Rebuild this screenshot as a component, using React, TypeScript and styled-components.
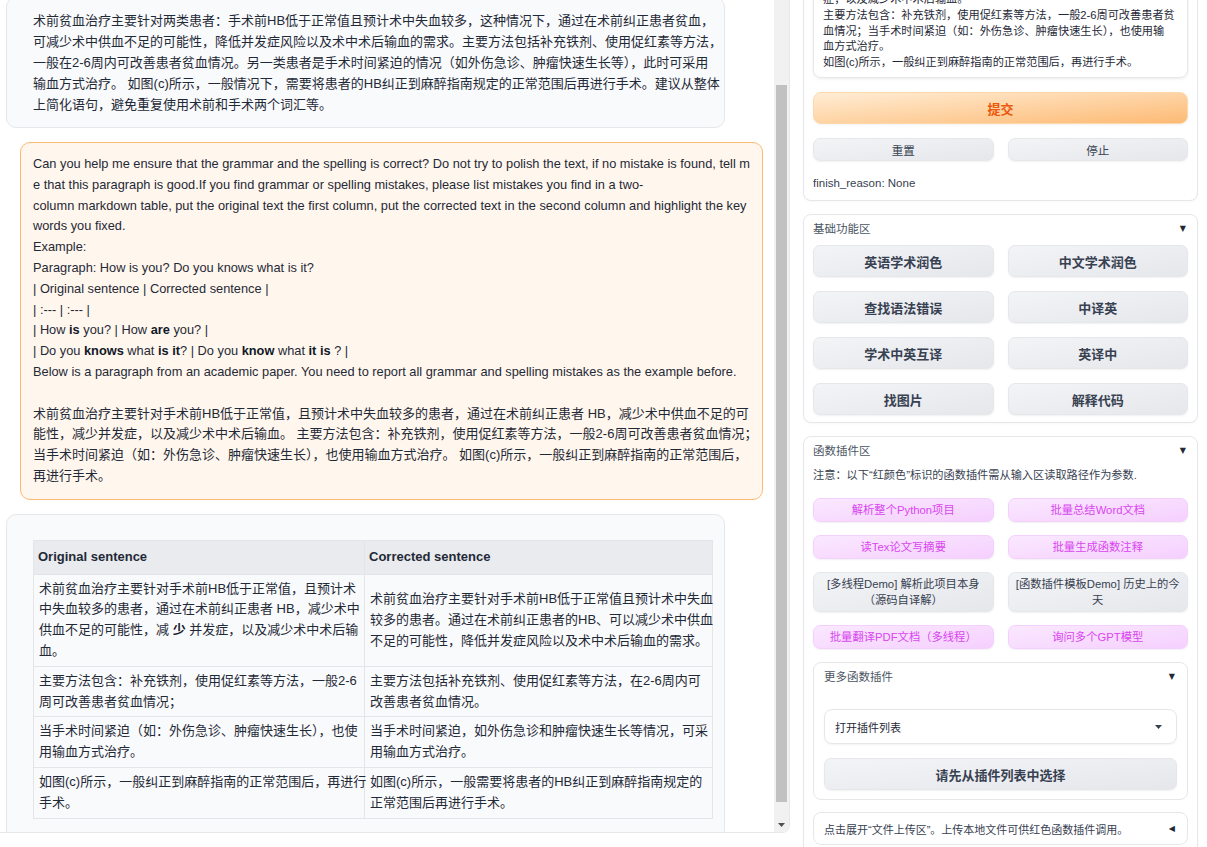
import React, { useLayoutEffect, useRef } from "react";
import styled, { createGlobalStyle } from "styled-components";

const FONT = `"Liberation Sans", "Noto Sans CJK SC", sans-serif`;

const Global = createGlobalStyle`
  html, body { margin: 0; padding: 0; background: #ffffff; overflow: hidden; }
  body { font-family: ${FONT}; color: #1f2937; }
  * { box-sizing: border-box; }
  button { font-family: ${FONT}; }
`;

/* ---------- page frame ---------- */

const Viewport = styled.div`
  height: 100vh;
  overflow: hidden;
`;

const Page = styled.div`
  display: grid;
  grid-template-columns: 790px 395px;
  column-gap: 13px;
  align-items: start;
  padding-bottom: 60px;
`;

/* ---------- chat ---------- */

const ChatBox = styled.div`
  height: 885px;
  border: 1px solid #e5e7eb;
  border-left: none;
  border-radius: 0 0 8px 0;
  display: flex;
  overflow: hidden;
  background: #ffffff;
`;

const ChatPane = styled.div`
  flex: 1;
  min-width: 0;
  overflow: hidden;
`;

const ScrollTrack = styled.div`
  flex: none;
  width: 15px;
  background: #f1f1f1;
  display: flex;
  flex-direction: column;
  align-items: center;
`;

const ScrollArrow = styled.div`
  flex: none;
  height: 15px;
  width: 15px;
  display: flex;
  align-items: center;
  justify-content: center;
`;

const ScrollThumb = styled.div<{ $top: number; $len: number }>`
  flex: none;
  margin-top: ${(p) => p.$top}px;
  height: ${(p) => p.$len}px;
  width: 11px;
  background: #c1c1c1;
`;

const ScrollRest = styled.div`
  flex: 1;
`;

const MessageList = styled.div`
  display: flex;
  flex-direction: column;
  gap: 14px;
  padding: 48px 11px 14px 6px;
`;

const Bubble = styled.div<{ $role: "user" | "bot"; $pad?: string }>`
  align-self: ${(p) => (p.$role === "user" ? "flex-end" : "flex-start")};
  width: ${(p) => (p.$role === "user" ? "743px" : "719px")};
  background: ${(p) => (p.$role === "user" ? "#fff7ed" : "#f9fafb")};
  border: 1px solid ${(p) => (p.$role === "user" ? "#fdba74" : "#e5e7eb")};
  border-radius: 10px;
  padding: ${(p) => p.$pad ?? (p.$role === "user" ? "11px 12px 12px" : "12px 26px 12px")};
  font-size: 13px;
  line-height: ${(p) => (p.$role === "user" ? "20.8px" : "21px")};
  color: #1f2937;
`;

const Line = styled.div<{ $latin?: boolean }>`
  white-space: pre;
  font-size: ${(p) => (p.$latin ? "12.8px" : "inherit")};
`;

const Strong = styled.strong`
  font-weight: 700;
  color: #111827;
`;

const Table = styled.table`
  border-collapse: collapse;
  table-layout: fixed;
  width: 679px;
  font-size: 13px;
  line-height: 20.8px;
`;

const Th = styled.th<{ $w: number }>`
  width: ${(p) => p.$w}px;
  background: #e9ebee;
  border: 1px solid #e3e5e8;
  text-align: left;
  font-weight: 700;
  padding: 6px 4px;
  color: #1f2937;
`;

const Td = styled.td`
  background: #f9fafb;
  border: 1px solid #e3e5e8;
  padding: 4px 5px;
  vertical-align: middle;
  color: #1f2937;
`;

/* ---------- side panel ---------- */

const Side = styled.div`
  display: flex;
  flex-direction: column;
  gap: 13px;
`;

const Block = styled.section<{ $pad: string; $gap?: number }>`
  background: #ffffff;
  border: 1px solid #e5e7eb;
  border-radius: 8px;
  padding: ${(p) => p.$pad};
  display: flex;
  flex-direction: column;
  gap: ${(p) => p.$gap ?? 0}px;
  box-shadow: 0 1px 2px rgba(0, 0, 0, 0.03);
`;

const InputArea = styled.div`
  height: 119px;
  border: 1px solid #e5e7eb;
  border-radius: 8px;
  box-shadow: 0 1px 3px rgba(0, 0, 0, 0.08);
  padding: 0 9px 6px;
  display: flex;
  flex-direction: column;
  justify-content: flex-end;
  overflow: hidden;
  font-size: 11.2px;
  line-height: 15.8px;
  color: #1f2937;
`;

const PrimaryButton = styled.button`
  height: 32px;
  border: 1px solid #fed7aa;
  border-radius: 8px;
  background: linear-gradient(to bottom right, #ffedd5, #fdba74);
  color: #ea580c;
  font-family: ${FONT};
  font-size: 13px;
  font-weight: 700;
  box-shadow: 0 1px 2px rgba(0, 0, 0, 0.05);
  cursor: pointer;
`;

const ButtonGrid = styled.div<{ $row: number }>`
  display: grid;
  grid-template-columns: 1fr 1fr;
  column-gap: 14px;
  row-gap: ${(p) => p.$row}px;
`;

const GrayButton = styled.button<{ $size: "sm" | "lg" }>`
  height: ${(p) => (p.$size === "lg" ? "32px" : "23px")};
  border: 1px solid #e5e7eb;
  border-radius: 7px;
  background: linear-gradient(to bottom right, #f3f4f6, #e5e7eb);
  color: #374151;
  font-family: ${FONT};
  font-size: ${(p) => (p.$size === "lg" ? "13px" : "11.5px")};
  font-weight: ${(p) => (p.$size === "lg" ? 700 : 400)};
  box-shadow: 0 1px 2px rgba(0, 0, 0, 0.06);
  cursor: pointer;
`;

const PluginButton = styled.button<{ $tone: "pink" | "gray" }>`
  min-height: 24px;
  padding: 3px 2px;
  border: 1px solid ${(p) => (p.$tone === "pink" ? "#f5d0fe" : "#e5e7eb")};
  border-radius: 7px;
  background: ${(p) =>
    p.$tone === "pink"
      ? "linear-gradient(to bottom right, #fae8ff, #f5d0fe)"
      : "linear-gradient(to bottom right, #f3f4f6, #e5e7eb)"};
  color: ${(p) => (p.$tone === "pink" ? "#d946ef" : "#374151")};
  font-family: ${FONT};
  font-size: 11.3px;
  font-weight: 400;
  line-height: 16px;
  white-space: nowrap;
  box-shadow: 0 1px 2px rgba(0, 0, 0, 0.06);
  cursor: pointer;
`;

const Status = styled.div`
  font-size: 11.5px;
  line-height: 16px;
  color: #374151;
`;

const BlockHeader = styled.div<{ $mb: number }>`
  display: flex;
  justify-content: space-between;
  align-items: center;
  font-size: 11.5px;
  line-height: 14px;
  color: #4b5563;
  margin-bottom: ${(p) => p.$mb}px;
`;

const Arrow = styled.span`
  font-family: "DejaVu Sans", sans-serif;
  font-size: 8px;
  color: #1f2937;
  margin-right: 2px;
`;

const Note = styled.div`
  font-size: 11.2px;
  line-height: 17px;
  color: #374151;
  margin-bottom: 14px;
`;

const SubBlock = styled.div`
  margin-top: 13px;
  border: 1px solid #e5e7eb;
  border-radius: 8px;
  padding: 7px 10px 9px;
  display: flex;
  flex-direction: column;
`;

const Select = styled.div`
  margin-top: 25px;
  margin-bottom: 14px;
  height: 35px;
  border: 1px solid #e5e7eb;
  border-radius: 8px;
  box-shadow: 0 1px 2px rgba(0, 0, 0, 0.05);
  display: flex;
  align-items: center;
  justify-content: space-between;
  padding: 0 14px 0 10px;
  font-size: 11px;
  color: #1f2937;
`;

const Upload = styled.div`
  margin-top: 12px;
  height: 33px;
  border: 1px solid #e5e7eb;
  border-radius: 8px;
  display: flex;
  align-items: center;
  justify-content: space-between;
  padding: 0 10px 0 10px;
  font-size: 11px;
  color: #374151;
`;

/* ---------- data ---------- */

const botReply = [
  "术前贫血治疗主要针对两类患者：手术前HB低于正常值且预计术中失血较多，这种情况下，通过在术前纠正患者贫血，",
  "可减少术中供血不足的可能性，降低并发症风险以及术中术后输血的需求。主要方法包括补充铁剂、使用促红素等方法，",
  "一般在2-6周内可改善患者贫血情况。另一类患者是手术时间紧迫的情况（如外伤急诊、肿瘤快速生长等），此时可采用",
  "输血方式治疗。 如图(c)所示，一般情况下，需要将患者的HB纠正到麻醉指南规定的正常范围后再进行手术。建议从整体",
  "上简化语句，避免重复使用术前和手术两个词汇等。",
];

const userEnglish: React.ReactNode[] = [
  "Can you help me ensure that the grammar and the spelling is correct? Do not try to polish the text, if no mistake is found, tell m",
  "e that this paragraph is good.If you find grammar or spelling mistakes, please list mistakes you find in a two-",
  "column markdown table, put the original text the first column, put the corrected text in the second column and highlight the key",
  "words you fixed.",
  "Example:",
  "Paragraph: How is you? Do you knows what is it?",
  "| Original sentence | Corrected sentence |",
  "| :--- | :--- |",
  <>
    {"| How "}
    <Strong>is</Strong>
    {" you? | How "}
    <Strong>are</Strong>
    {" you? |"}
  </>,
  <>
    {"| Do you "}
    <Strong>knows</Strong>
    {" what "}
    <Strong>is it</Strong>
    {"? | Do you "}
    <Strong>know</Strong>
    {" what "}
    <Strong>it is</Strong>
    {" ? |"}
  </>,
  "Below is a paragraph from an academic paper. You need to report all grammar and spelling mistakes as the example before.",
];

const userChinese = [
  "\u00a0",
  "术前贫血治疗主要针对手术前HB低于正常值，且预计术中失血较多的患者，通过在术前纠正患者 HB，减少术中供血不足的可",
  "能性，减少并发症，以及减少术中术后输血。 主要方法包含：补充铁剂，使用促红素等方法，一般2-6周可改善患者贫血情况；",
  "当手术时间紧迫（如：外伤急诊、肿瘤快速生长），也使用输血方式治疗。 如图(c)所示，一般纠正到麻醉指南的正常范围后，",
  "再进行手术。",
];

const tableRows: { a: React.ReactNode[]; b: React.ReactNode[] }[] = [
  {
    a: [
      "术前贫血治疗主要针对手术前HB低于正常值，且预计术",
      "中失血较多的患者，通过在术前纠正患者 HB，减少术中",
      <>
        {"供血不足的可能性，减 "}
        <Strong>少</Strong>
        {" 并发症，以及减少术中术后输"}
      </>,
      "血。",
    ],
    b: [
      "术前贫血治疗主要针对手术前HB低于正常值且预计术中失血",
      "较多的患者。通过在术前纠正患者的HB、可以减少术中供血",
      "不足的可能性，降低并发症风险以及术中术后输血的需求。",
    ],
  },
  {
    a: ["主要方法包含：补充铁剂，使用促红素等方法，一般2-6", "周可改善患者贫血情况；"],
    b: ["主要方法包括补充铁剂、使用促红素等方法，在2-6周内可", "改善患者贫血情况。"],
  },
  {
    a: ["当手术时间紧迫（如：外伤急诊、肿瘤快速生长），也使", "用输血方式治疗。"],
    b: ["当手术时间紧迫，如外伤急诊和肿瘤快速生长等情况，可采", "用输血方式治疗。"],
  },
  {
    a: ["如图(c)所示，一般纠正到麻醉指南的正常范围后，再进行", "手术。"],
    b: ["如图(c)所示，一般需要将患者的HB纠正到麻醉指南规定的", "正常范围后再进行手术。"],
  },
];

const inputLines = [
  "症，以及减少术中术后输血。",
  "主要方法包含：补充铁剂，使用促红素等方法，一般2-6周可改善患者贫",
  "血情况；当手术时间紧迫（如：外伤急诊、肿瘤快速生长），也使用输",
  "血方式治疗。",
  "如图(c)所示，一般纠正到麻醉指南的正常范围后，再进行手术。",
];

const basicFns = ["英语学术润色", "中文学术润色", "查找语法错误", "中译英", "学术中英互译", "英译中", "找图片", "解释代码"];

const plugins: { tone: "pink" | "gray"; lines: string[] }[] = [
  { tone: "pink", lines: ["解析整个Python项目"] },
  { tone: "pink", lines: ["批量总结Word文档"] },
  { tone: "pink", lines: ["读Tex论文写摘要"] },
  { tone: "pink", lines: ["批量生成函数注释"] },
  { tone: "gray", lines: ["[多线程Demo] 解析此项目本身", "（源码自译解）"] },
  { tone: "gray", lines: ["[函数插件模板Demo] 历史上的今", "天"] },
  { tone: "pink", lines: ["批量翻译PDF文档（多线程）"] },
  { tone: "pink", lines: ["询问多个GPT模型"] },
];

const renderLines = (lines: React.ReactNode[], latin = false) =>
  lines.map((l, i) => (
    <Line key={i} $latin={latin}>
      {l}
    </Line>
  ));

/* ---------- app ---------- */

export default function App() {
  const viewRef = useRef<HTMLDivElement>(null);

  useLayoutEffect(() => {
    if (viewRef.current) viewRef.current.scrollTop = 52;
  }, []);

  return (
    <>
      <Global />
      <Viewport ref={viewRef}>
        <Page>
          <ChatBox>
            <ChatPane>
              <MessageList>
                <Bubble $role="bot">{renderLines(botReply)}</Bubble>
                <Bubble $role="user">
                  {renderLines(userEnglish, true)}
                  {renderLines(userChinese)}
                </Bubble>
                <Bubble $role="bot" $pad="25px 26px 20px">
                  <Table>
                    <thead>
                      <tr>
                        <Th $w={331}>Original sentence</Th>
                        <Th $w={348}>Corrected sentence</Th>
                      </tr>
                    </thead>
                    <tbody>
                      {tableRows.map((r, i) => (
                        <tr key={i}>
                          <Td>{renderLines(r.a)}</Td>
                          <Td>{renderLines(r.b)}</Td>
                        </tr>
                      ))}
                    </tbody>
                  </Table>
                </Bubble>
              </MessageList>
            </ChatPane>
            <ScrollTrack>
              <ScrollArrow>
                <svg width="7" height="4" viewBox="0 0 7 4">
                  <path d="M0 4 L7 4 L3.5 0 Z" fill="#505050" />
                </svg>
              </ScrollArrow>
              <ScrollThumb $top={121} $len={717} />
              <ScrollRest />
              <ScrollArrow>
                <svg width="7" height="4" viewBox="0 0 7 4">
                  <path d="M0 0 L7 0 L3.5 4 Z" fill="#505050" />
                </svg>
              </ScrollArrow>
            </ScrollTrack>
          </ChatBox>

          <Side>
            <Block $pad="10px 9px 9px" $gap={14}>
              <InputArea>{renderLines(inputLines)}</InputArea>
              <PrimaryButton>提交</PrimaryButton>
              <ButtonGrid $row={14}>
                <GrayButton $size="sm">重置</GrayButton>
                <GrayButton $size="sm">停止</GrayButton>
              </ButtonGrid>
              <Status>finish_reason: None</Status>
            </Block>

            <Block $pad="7px 9px 7px">
              <BlockHeader $mb={9}>
                <span>基础功能区</span>
                <Arrow>▼</Arrow>
              </BlockHeader>
              <ButtonGrid $row={14}>
                {basicFns.map((f) => (
                  <GrayButton key={f} $size="lg">
                    {f}
                  </GrayButton>
                ))}
              </ButtonGrid>
            </Block>

            <Block $pad="7px 9px 9px">
              <BlockHeader $mb={9}>
                <span>函数插件区</span>
                <Arrow>▼</Arrow>
              </BlockHeader>
              <Note>注意：以下“红颜色”标识的函数插件需从输入区读取路径作为参数.</Note>
              <ButtonGrid $row={13}>
                {plugins.map((p, i) => (
                  <PluginButton key={i} $tone={p.tone}>
                    {p.lines.map((l, j) => (
                      <Line key={j}>{l}</Line>
                    ))}
                  </PluginButton>
                ))}
              </ButtonGrid>
              <SubBlock>
                <BlockHeader $mb={0}>
                  <span>更多函数插件</span>
                  <Arrow>▼</Arrow>
                </BlockHeader>
                <Select>
                  <span>打开插件列表</span>
                  <svg width="7" height="4" viewBox="0 0 7 4">
                    <path d="M0 0 L7 0 L3.5 4 Z" fill="#374151" />
                  </svg>
                </Select>
                <GrayButton $size="lg">请先从插件列表中选择</GrayButton>
              </SubBlock>
              <Upload>
                <span>点击展开“文件上传区”。上传本地文件可供红色函数插件调用。</span>
                <Arrow>◀</Arrow>
              </Upload>
            </Block>
          </Side>
        </Page>
      </Viewport>
    </>
  );
}
